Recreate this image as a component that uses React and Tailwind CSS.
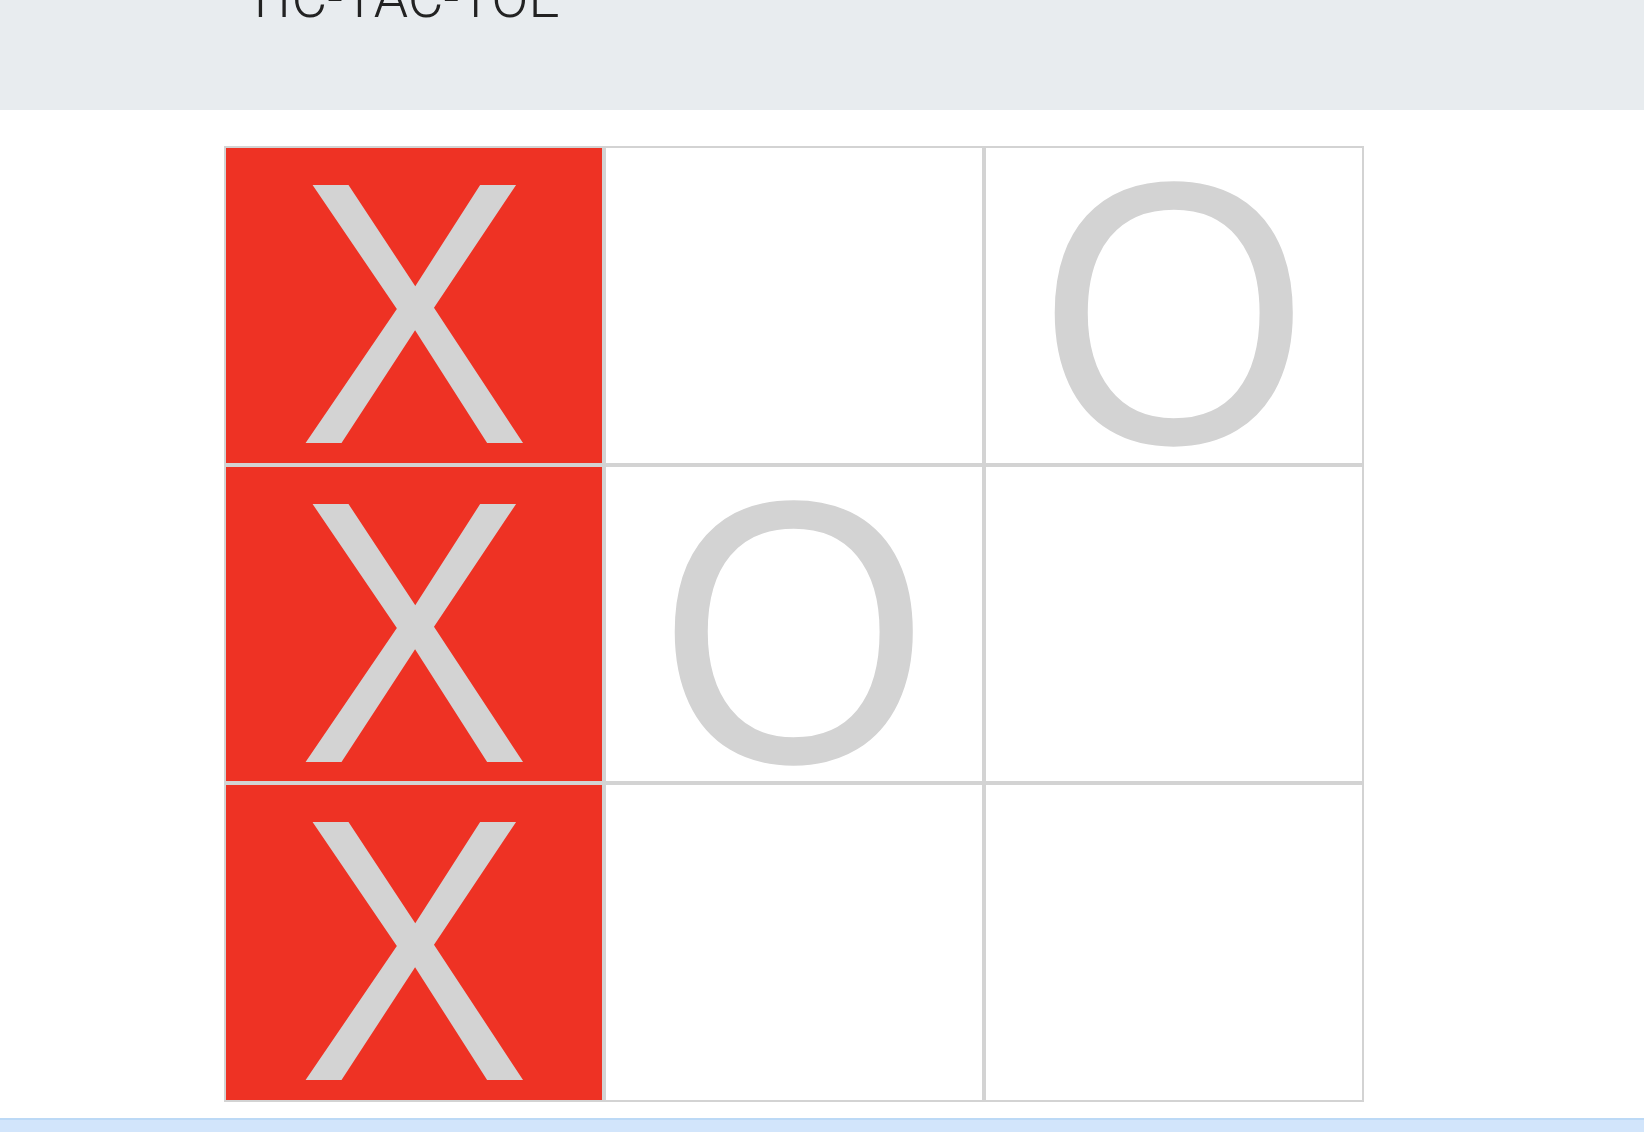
const board = ['X', '', 'O', 'X', 'O', '', 'X', '', ''];
const winLine = [0, 3, 6];

const Cell = ({ value, win }) => (
  <div
    className={`flex items-center justify-center overflow-hidden border-2 border-[#d3d3d3] ${
      win ? 'bg-[#ee3224]' : 'bg-white'
    }`}
  >
    {value && (
      <span className="translate-y-[8px] scale-x-[0.93] select-none text-[375px] leading-none text-[#d3d3d3]">
        {value}
      </span>
    )}
  </div>
);

export default function App() {
  return (
    <div className="min-h-screen bg-white font-['Liberation_Sans',Arial,sans-serif]">
      {/* Title bar (scrolled so only the bottom of the heading shows) */}
      <header className="flex h-[110px] items-start overflow-hidden bg-[#e8ecef]">
        <h1 className="-mt-[29px] ml-[244px] font-['Roboto','Liberation_Sans',sans-serif] text-[55px] font-light leading-none text-[#222]">
          TIC-TAC-TOE
        </h1>
      </header>

      {/* Board */}
      <main className="pl-[224px] pt-[36px]">
        <div className="grid h-[956px] w-[1140px] grid-cols-3 grid-rows-3">
          {board.map((v, i) => (
            <Cell key={i} value={v} win={winLine.includes(i)} />
          ))}
        </div>
      </main>

      <footer className="mt-[16px] h-[40px] border-t-2 border-[#bcd9f6] bg-[#d2e5fb]" />
    </div>
  );
}
